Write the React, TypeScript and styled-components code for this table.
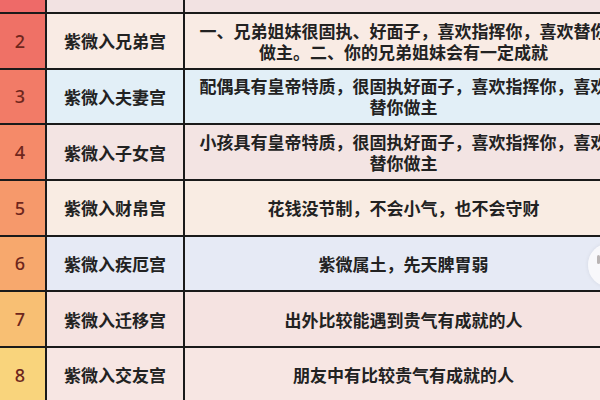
import styled, { createGlobalStyle } from 'styled-components'

const GlobalStyle = createGlobalStyle`
    html, body {
        margin: 0;
        padding: 0;
        width: 600px;
        height: 400px;
        overflow: hidden;
        background: #f6e5e2;
    }
`

const Table = styled.div`
    position: relative;
    width: 622px;
    height: 400px;
    overflow: hidden;
    font-family: "Noto Sans CJK SC", "Noto Sans", sans-serif;
    color: #222;
`

const Row = styled.div<{ $h: number; $bg: string }>`
    display: grid;
    grid-template-columns: 47px 138px 1fr;
    height: ${props => props.$h}px;
    border-bottom: 2px solid #1a1a1a;
    background: ${props => props.$bg};
`

const NumCell = styled.div<{ $bg: string }>`
    display: flex;
    align-items: center;
    justify-content: center;
    padding-right: 5px;
    background: ${props => props.$bg};
    border-right: 2px solid #1a1a1a;
    font-family: "Noto Sans", "Liberation Sans", sans-serif;
    font-size: 18px;
    font-weight: 500;
    color: #6e261c;
`

const NameCell = styled.div`
    display: flex;
    align-items: center;
    justify-content: center;
    border-right: 2px solid #1a1a1a;
    font-size: 17px;
    font-weight: 600;
`

const DescCell = styled.div`
    display: flex;
    align-items: center;
    justify-content: center;
    padding: 0 12px;
    text-align: center;
    font-size: 17px;
    font-weight: 600;
    line-height: 21px;
`

const FloatButton = styled.div`
    position: absolute;
    left: 588px;
    top: 243px;
    width: 44px;
    height: 44px;
    border-radius: 50%;
    background: rgba(250, 250, 252, 0.9);
    box-shadow: 0 0 4px rgba(0, 0, 0, 0.08);

    &::after {
        content: '';
        position: absolute;
        left: 9px;
        top: 12px;
        width: 3px;
        height: 9px;
        border-radius: 2px;
        background: #b9b4b4;
    }
`

type Item = {
    no: string
    name: string
    desc: string
    numBg: string
    bg: string
}

const rows: Item[] = [
    { no: '2', name: '紫微入兄弟宫', desc: '一、兄弟姐妹很固执、好面子，喜欢指挥你，喜欢替你做主。二、你的兄弟姐妹会有一定成就', numBg: '#ef7166', bg: '#f9ebe4' },
    { no: '3', name: '紫微入夫妻宫', desc: '配偶具有皇帝特质，很固执好面子，喜欢指挥你，喜欢替你做主', numBg: '#f27b67', bg: '#e2eff7' },
    { no: '4', name: '紫微入子女宫', desc: '小孩具有皇帝特质，很固执好面子，喜欢指挥你，喜欢替你做主', numBg: '#f58a69', bg: '#f3e4e3' },
    { no: '5', name: '紫微入财帛宫', desc: '花钱没节制，不会小气，也不会守财', numBg: '#f6996b', bg: '#f9ece3' },
    { no: '6', name: '紫微入疾厄宫', desc: '紫微属土，先天脾胃弱', numBg: '#f7a86d', bg: '#e6eaf5' },
    { no: '7', name: '紫微入迁移宫', desc: '出外比较能遇到贵气有成就的人', numBg: '#f8bf73', bg: '#f5e3e1' },
    { no: '8', name: '紫微入交友宫', desc: '朋友中有比较贵气有成就的人', numBg: '#f9d47c', bg: '#f7e6e3' },
]

export default function App() {
    return (
        <>
            <GlobalStyle />
            <Table>
                <Row $h={12} $bg="#f2e2e2">
                    <NumCell $bg="#ee6a68" />
                    <NameCell />
                    <DescCell />
                </Row>
                {rows.map(r => (
                    <Row key={r.no} $h={53.67} $bg={r.bg}>
                        <NumCell $bg={r.numBg}>{r.no}</NumCell>
                        <NameCell>{r.name}</NameCell>
                        <DescCell>{r.desc}</DescCell>
                    </Row>
                ))}
                <FloatButton />
            </Table>
        </>
    )
}
